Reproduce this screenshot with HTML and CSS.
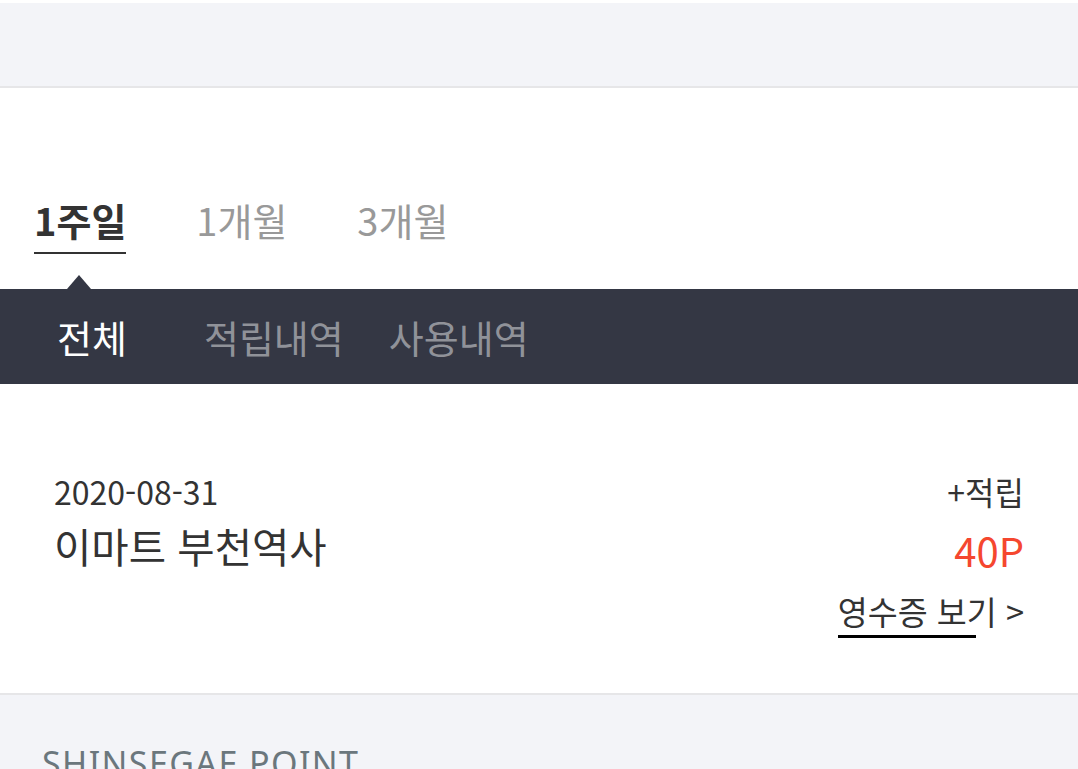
FILE: index.html
```html
<!DOCTYPE html>
<html lang="ko">
<head>
<meta charset="utf-8">
<title>포인트 내역</title>
<link rel="stylesheet" href="styles.css">
</head>
<body>
<div class="top-band"></div>

<div class="period">
  <span class="period-tab active">1주일</span>
  <span class="period-tab">1개월</span>
  <span class="period-tab">3개월</span>
</div>

<div class="type-bar">
  <span class="caret"></span>
  <span class="type-tab active">전체</span>
  <span class="type-tab t2">적립내역</span>
  <span class="type-tab t3">사용내역</span>
</div>

<div class="history">
  <div class="item">
    <div class="item-left">
      <div class="date">2020-08-31</div>
      <div class="store">이마트 부천역사</div>
    </div>
    <div class="item-right">
      <div class="kind">+적립</div>
      <div class="points">40P</div>
      <div class="receipt"><span class="receipt-link">영수증 보기</span> &gt;</div>
    </div>
  </div>
</div>

<div class="footer">
  <div class="brand">SHINSEGAE POINT</div>
</div>
</body>
</html>
```

FILE: styles.css
```css
html, body {
  margin: 0;
  padding: 0;
  background: #ffffff;
  font-family: "Noto Sans CJK KR", "Noto Sans", sans-serif;
  color: #333333;
  overflow: hidden;
}

.top-band {
  margin-top: 3px;
  height: 83px;
  background: #f3f4f8;
  border-bottom: 2px solid #e6e6e8;
}

.period {
  display: flex;
  align-items: flex-start;
  padding: 113px 0 0 34px;
  height: 201px;
  box-sizing: border-box;
  gap: 70px;
}

.period-tab {
  font-size: 38px;
  line-height: 38px;
  color: #999999;
  padding-bottom: 13px;
}

.period-tab.active {
  font-weight: 700;
  color: #333333;
  border-bottom: 2px solid #333333;
}

.type-bar {
  position: relative;
  display: flex;
  align-items: center;
  height: 95px;
  background: #343744;
  padding-left: 57px;
}

.caret {
  position: absolute;
  left: 67px;
  top: -14px;
  width: 0;
  height: 0;
  border-left: 12px solid transparent;
  border-right: 12px solid transparent;
  border-bottom: 14px solid #343744;
}

.type-tab {
  font-size: 38px;
  line-height: 40px;
  color: #909299;
}

.type-tab.active {
  color: #ffffff;
}

.type-tab.t2 { margin-left: 77px; }
.type-tab.t3 { margin-left: 45px; }

.history {
  border-bottom: 2px solid #e6e6e8;
}

.item {
  display: flex;
  justify-content: space-between;
  padding: 87px 54px 55px 54px;
}

.date {
  font-size: 32px;
  line-height: 40px;
}

.store {
  font-size: 40.6px;
  line-height: 50px;
  margin-top: 10px;
}

.item-right {
  display: flex;
  flex-direction: column;
  align-items: flex-end;
}

.kind {
  font-size: 32px;
  line-height: 40px;
}

.points {
  font-size: 40px;
  line-height: 50px;
  color: #f5472f;
  margin-top: 14px;
}

.receipt {
  font-size: 32.6px;
  line-height: 40px;
  margin-top: 16px;
}

.receipt-link {
  display: inline-block;
  padding-bottom: 7px;
  line-height: 40px;
  background: linear-gradient(#000000, #000000) no-repeat left bottom / 138px 3px;
}

.footer {
  background: #f3f4f8;
  height: 200px;
  padding: 48px 0 0 42px;
}

.brand {
  font-family: "Noto Sans", sans-serif;
  font-size: 34px;
  line-height: 40px;
  color: #6b777d;
  letter-spacing: 1.4px;
}
```
